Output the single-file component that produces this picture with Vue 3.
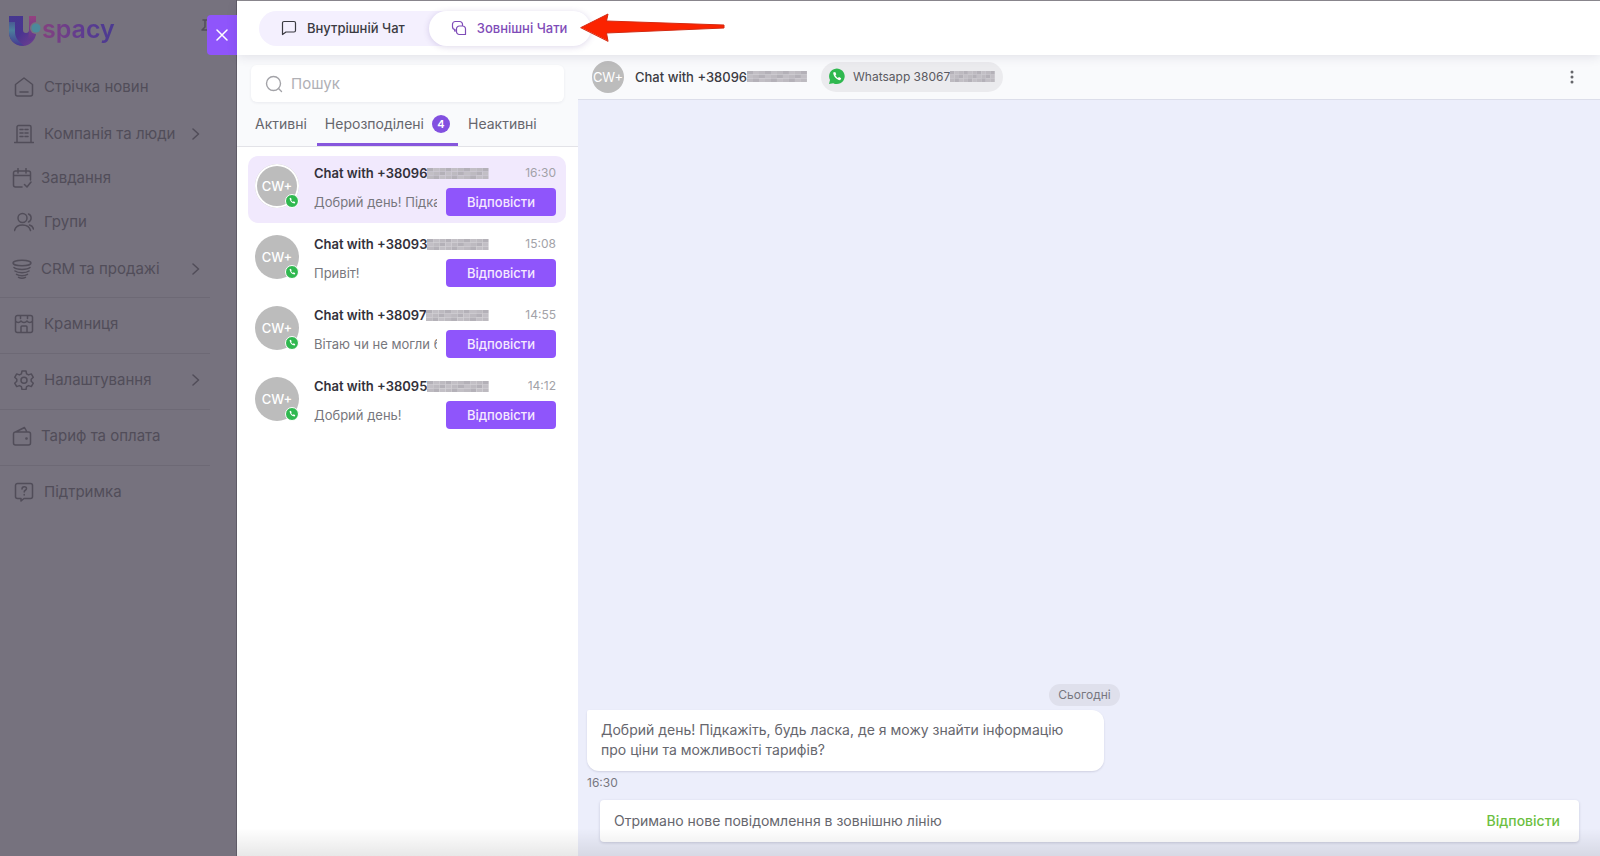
<!--
  App.vue
  Зовнішні чати: бічне меню під затемненням, список розмов і відкрита розмова.
-->

<script setup>
import { computed, ref } from "vue";

const navGroups = [
  [
    { icon: "home", label: "Стрічка новин" },
    { icon: "company", label: "Компанія та люди", expandable: true },
    { icon: "tasks", label: "Завдання", compact: true },
    { icon: "groups", label: "Групи" },
    { icon: "crm", label: "CRM та продажі", expandable: true, compact: true },
  ],
  [{ icon: "shop", label: "Крамниця" }],
  [{ icon: "settings", label: "Налаштування", expandable: true }],
  [{ icon: "wallet", label: "Тариф та оплата", compact: true }],
  [{ icon: "support", label: "Підтримка" }],
];

const tabs = [
  { id: "active", label: "Активні" },
  { id: "unassigned", label: "Нерозподілені", count: 4 },
  { id: "inactive", label: "Неактивні" },
];

const chats = [
  { id: 1, name: "Chat with +38096", text: "Добрий день! Підкажіть", time: "16:30" },
  { id: 2, name: "Chat with +38093", text: "Привіт!", time: "15:08" },
  { id: 3, name: "Chat with +38097", text: "Вітаю чи не могли б", time: "14:55" },
  { id: 4, name: "Chat with +38095", text: "Добрий день!", time: "14:12" },
];

const mode = ref("external");
const activeTab = ref("unassigned");
const activeChatId = ref(1);
const search = ref("");

const visibleChats = computed(() =>
  chats.filter((chat) => chat.name.toLowerCase().includes(search.value.toLowerCase()))
);

// клітинки мозаїки, що закриває кінець номера
const shades = ["#b4b1b8", "#a9a6ad", "#bdbac0", "#c9c7cc", "#b0adb3", "#c2bfc5", "#a5a2a9", "#d0ced3"];
const cells = Array.from({ length: 30 }, (_, i) => ({
  x: i % 10,
  y: Math.floor(i / 10),
  fill: shades[(i * 5 + Math.floor(i / 3)) % shades.length],
}));
</script>

<template>
  <div class="app">
    <aside class="sidebar">
      <div class="sidebar-head">
        <a class="logo" href="#" aria-label="Uspacy">
          <svg width="32" height="32" viewBox="0 0 32 32" aria-hidden="true">
            <defs>
              <linearGradient id="mark" x1="0" y1="0" x2="1" y2="1">
                <stop offset="0" stop-color="#45388f" />
                <stop offset="0.5" stop-color="#4a3490" />
                <stop offset="1" stop-color="#74408f" />
              </linearGradient>
              <linearGradient id="side" x1="0" y1="0" x2="0" y2="1">
                <stop offset="0" stop-color="#4a5a94" />
                <stop offset="0.35" stop-color="#4c7f9c" />
                <stop offset="1" stop-color="#443a92" />
              </linearGradient>
              <linearGradient id="stem" x1="0" y1="0" x2="0" y2="1">
                <stop offset="0" stop-color="#95417f" />
                <stop offset="1" stop-color="#5b3990" />
              </linearGradient>
            </defs>
            <path d="M0 1h14v14a3 3 0 0 0 6 0V1h7v16.500a13.500 13.500 0 0 1-27 0z" fill="url(#mark)" />
            <path d="M0 7h6v10c0 6 4 10 9 13.500C6 31 0 25 0 17z" fill="url(#side)" />
            <path d="M20 1h7v16c0 5-3 8-6 9-3-2-1-6-1-10z" fill="url(#stem)" />
            <circle cx="27" cy="13" r="6" fill="#76727e" />
            <circle cx="27" cy="13" r="4.500" fill="#4b8a9b" />
          </svg>
          <span class="logo-text">spacy</span>
        </a>
        <svg class="pin" width="18" height="20" viewBox="0 0 18 20" aria-hidden="true">
          <path d="M3 2h12M5 2v7l-3 3h14l-3-3V2M9 12v7" />
        </svg>
      </div>

      <nav class="nav">
        <ul v-for="(group, index) in navGroups" :key="index" class="nav-group">
          <li
            v-for="item in group"
            :key="item.label"
            :class="['nav-item', { 'nav-item--expandable': item.expandable }]"
          >
            <a href="#" :class="['nav-link', { 'nav-link--compact': item.compact }]">
              <svg class="nav-icon" width="20" height="20" viewBox="0 0 20 20" aria-hidden="true">
                <path
                  v-if="item.icon === 'home'"
                  d="M1.500 7.500 10 1l8.500 6.500V17a2 2 0 0 1-2 2h-13a2 2 0 0 1-2-2zM6 15h8"
                />
                <path
                  v-else-if="item.icon === 'company'"
                  d="M3 18V3a1.500 1.500 0 0 1 1.500-1.500h11A1.500 1.500 0 0 1 17 3v15M.5 18.500h19M6 5.500h3M11 5.500h3M6 9h3M11 9h3M6 12.500h3M11 12.500h3"
                />
                <path
                  v-else-if="item.icon === 'tasks'"
                  d="M6 .5V5M14 .5V5M1.500 7.500h17V5a2 2 0 0 0-2-2h-13a2 2 0 0 0-2 2v12a2 2 0 0 0 2 2H10M18.500 7.500V12M12.500 16.500l2.500 2.500 4-5"
                />
                <g v-else-if="item.icon === 'groups'">
                  <circle cx="8.500" cy="6" r="4.500" />
                  <path d="M.5 18.500c1-4 4-5.500 8-5.500s7 1.500 8 5.500M14.500 2c3.500 1.500 3.500 6.500 0 8M15.500 13c2 .5 3.500 2 4 4" />
                </g>
                <g v-else-if="item.icon === 'crm'">
                  <ellipse cx="10" cy="4" rx="9" ry="2.800" />
                  <path d="M2 8.500c3 2.500 13 2.500 16 0M3 12c3 2.200 11 2.200 14 0M4.500 15.300c3 1.800 8 1.800 11 0M6.500 18.300c2 1 5 1 7 0" />
                </g>
                <path
                  v-else-if="item.icon === 'shop'"
                  d="M3.500 1.500h13a2 2 0 0 1 2 2v13a2 2 0 0 1-2 2h-13a2 2 0 0 1-2-2v-13a2 2 0 0 1 2-2zM6.500 1.500v3M13.500 1.500v3M1.500 7c1.500 2 4 2 5.500 0 1.500 2 4.500 2 6 0 1.500 2 4 2 5.500 0M7 18.500V13a1 1 0 0 1 1-1h4a1 1 0 0 1 1 1v5.500"
                />
                <g v-else-if="item.icon === 'settings'">
                  <path
                    d="M8 1h4l.6 2.800 2 1.100 2.700-1 2 3.400-2.100 1.900v2.100l2.100 1.900-2 3.400-2.700-1-2 1.100L12 19.500H8l-.6-2.800-2-1.100-2.700 1-2-3.400 2.100-1.900V9.200L.7 7.300l2-3.400 2.700 1 2-1.100z"
                  />
                  <circle cx="10" cy="10.200" r="3" />
                </g>
                <g v-else-if="item.icon === 'wallet'">
                  <path d="M3.500 6h13a2 2 0 0 1 2 2v9a2 2 0 0 1-2 2h-13a2 2 0 0 1-2-2V8a2 2 0 0 1 2-2zL12.500 1.500 15 6" />
                  <circle cx="14.500" cy="12.500" r=".6" />
                </g>
                <path
                  v-else
                  d="M3.500 1.500h13a2 2 0 0 1 2 2v11a2 2 0 0 1-2 2H10l-3 2.500v-2.500H3.500a2 2 0 0 1-2-2v-11a2 2 0 0 1 2-2zM8 7c0-3 4.500-3 4.500-.5 0 2-2.300 1.500-2.300 3.500M10.200 12.500v.5"
                />
              </svg>
              <span>{{ item.label }}</span>
              <svg v-if="item.expandable" class="nav-chevron" width="8" height="12" viewBox="0 0 8 12" aria-hidden="true">
                <path d="M1 1l5.500 5L1 11" />
              </svg>
            </a>
          </li>
        </ul>
      </nav>

      <button class="close-btn" aria-label="Закрити">
        <svg width="12" height="12" viewBox="0 0 12 12" aria-hidden="true">
          <path d="M1 1l10 10M11 1L1 11" />
        </svg>
      </button>
    </aside>

    <main class="drawer">
      <header class="topbar">
        <div class="mode-switch">
          <button :class="['mode-btn', { active: mode === 'internal' }]" @click="mode = 'internal'">
            <svg width="16" height="16" viewBox="0 0 16 16" aria-hidden="true">
              <path d="M3 1.500h10A1.500 1.500 0 0 1 14.500 3v7.500A1.500 1.500 0 0 1 13 12H5l-3.500 2.500V3A1.500 1.500 0 0 1 3 1.500z" />
            </svg>
            Внутрішній Чат
          </button>
          <button :class="['mode-btn', { active: mode === 'external' }]" @click="mode = 'external'">
            <svg width="16" height="16" viewBox="0 0 16 16" aria-hidden="true">
              <path
                d="M5.500 11H3.500L4 9.500A2.800 2.800 0 0 1 1.500 6.700V4.300a2.800 2.800 0 0 1 2.800-2.800h4.400a2.800 2.800 0 0 1 2.800 2.800V6M8.300 6h3.400a2.800 2.800 0 0 1 2.800 2.800v5.700H8.300a2.800 2.800 0 0 1-2.800-2.800V8.800A2.800 2.800 0 0 1 8.300 6z"
              />
            </svg>
            Зовнішні Чати
          </button>
        </div>
        <svg class="pointer" width="146" height="30" viewBox="0 0 146 30" aria-hidden="true">
          <path d="M1 14.500 28 1 26.500 8 144 12v3L26.500 20 28 28z" />
        </svg>
      </header>

      <div class="workspace">
        <section class="chat-list">
          <div class="list-head">
            <label class="search">
              <svg width="18" height="18" viewBox="0 0 18 18" aria-hidden="true">
                <circle cx="8.500" cy="8.500" r="7" />
                <path d="M13.500 13.500l3 3" />
              </svg>
              <input v-model="search" type="text" placeholder="Пошук" aria-label="Пошук" />
            </label>
            <div class="tabs">
              <button
                v-for="tab in tabs"
                :key="tab.id"
                :class="['tab-btn', { active: activeTab === tab.id }]"
                @click="activeTab = tab.id"
              >
                {{ tab.label }}
                <span v-if="tab.count" class="tab-count">{{ tab.count }}</span>
              </button>
            </div>
          </div>

          <ul class="chats">
            <li
              v-for="chat in visibleChats"
              :key="chat.id"
              :class="['chat', { active: chat.id === activeChatId }]"
              @click="activeChatId = chat.id"
            >
              <div class="avatar">
                CW+
                <svg class="avatar-badge" width="14" height="14" viewBox="0 0 14 14" aria-hidden="true">
                  <circle cx="7" cy="7" r="6.500" fill="#2fb84f" stroke="#fff" />
                  <path d="M4.500 4.200c.5 3 2.300 4.900 5.200 5.400l.6-1.400-1.600-.9-.8.700c-.8-.4-1.400-1-1.800-1.900l.6-.7-.8-1.600z" fill="#fff" />
                </svg>
              </div>
              <div class="chat-body">
                <div class="chat-row">
                  <div class="chat-name">
                    {{ chat.name }}
                    <svg class="mosaic" viewBox="0 0 10 3" preserveAspectRatio="none" aria-hidden="true">
                      <rect v-for="(cell, i) in cells" :key="i" :x="cell.x" :y="cell.y" width="1" height="1" :fill="cell.fill" />
                    </svg>
                  </div>
                  <time class="chat-time">{{ chat.time }}</time>
                </div>
                <div class="chat-row">
                  <p class="chat-text">{{ chat.text }}</p>
                  <button class="btn-reply">Відповісти</button>
                </div>
              </div>
            </li>
          </ul>
        </section>

        <section class="conversation">
          <header class="conversation-head">
            <div class="avatar avatar--small">CW+</div>
            <h1 class="conversation-title">
              Chat with +38096
              <svg class="mosaic" viewBox="0 0 10 3" preserveAspectRatio="none" aria-hidden="true">
                <rect v-for="(cell, i) in cells" :key="i" :x="cell.x" :y="cell.y" width="1" height="1" :fill="cell.fill" />
              </svg>
            </h1>
            <div class="channel">
              <svg width="17" height="17" viewBox="0 0 17 17" aria-hidden="true">
                <path d="M1 16l1-4a7.800 7.800 0 1 1 3.200 3.200z" fill="#2fb84f" />
                <path d="M5.200 4.500c.2 4 3 7 7 7.800l1-2-2.200-1.400-1.100 1c-1.200-.5-2-1.400-2.500-2.600l.9-1L7.200 4z" fill="#fff" />
              </svg>
              <span class="channel-name">
                Whatsapp 38067
                <svg class="mosaic" viewBox="0 0 10 3" preserveAspectRatio="none" aria-hidden="true">
                  <rect v-for="(cell, i) in cells" :key="i" :x="cell.x" :y="cell.y" width="1" height="1" :fill="cell.fill" />
                </svg>
              </span>
            </div>
            <button class="menu-btn" aria-label="Меню">
              <svg width="4" height="14" viewBox="0 0 4 14" aria-hidden="true">
                <circle cx="2" cy="2" r="1.500" />
                <circle cx="2" cy="7" r="1.500" />
                <circle cx="2" cy="12" r="1.500" />
              </svg>
            </button>
          </header>

          <div class="messages">
            <span class="day">Сьогодні</span>
            <p class="bubble">Добрий день! Підкажіть, будь ласка, де я можу знайти інформацію про ціни та можливості тарифів?</p>
            <time class="bubble-time">16:30</time>
          </div>

          <footer class="notice">
            <span>Отримано нове повідомлення в зовнішню лінію</span>
            <button class="notice-btn">Відповісти</button>
          </footer>
        </section>
      </div>
      <div class="bottom-shade"></div>
    </main>
  </div>
</template>

<style>
body {
  background: #76727e;
}
</style>

<style scoped>
.app,
.app *,
.app *::before {
  box-sizing: border-box;
}

.app {
  display: flex;
  min-height: 100vh;
  font-family: Inter, "Noto Sans", sans-serif;
  font-size: 13px;
  line-height: 20px;
  color: #3b3b42;
}

button {
  padding: 0;
  border: none;
  background: none;
  color: inherit;
  font: inherit;
  cursor: pointer;
}

ul {
  margin: 0;
  padding: 0;
  list-style: none;
}

svg {
  flex-shrink: 0;
  fill: none;
  stroke-linecap: round;
  stroke-linejoin: round;
}

/* бічне меню */
.sidebar {
  position: relative;
  flex: 0 0 237px;
  border-right: 1px solid #5f5b67;
  background: #76727e;
  color: #514d59;
}

.sidebar-head {
  display: flex;
  align-items: center;
  justify-content: space-between;
  height: 65px;
  padding: 0 18px 4px 9px;
}

.logo {
  display: flex;
  align-items: center;
  gap: 1px;
  text-decoration: none;
}

.logo-text {
  padding-bottom: 4px;
  background: linear-gradient(90deg, #84417f, #5b3b91 60%, #4a3a91);
  background-clip: text;
  color: transparent;
  font-size: 25px;
  font-weight: 600;
  line-height: 32px;
}

.pin {
  margin-bottom: 6px;
  stroke: #514d59;
  stroke-width: 1.5;
}

.nav-group {
  padding: 4px 0 7px;
}

.nav-group:first-child {
  padding: 0 0 6px;
}

.nav-group:not(:last-child) {
  width: 210px;
  border-bottom: 1px solid #6d6975;
}

.nav-item + .nav-item--expandable {
  margin-top: 3px;
}

.nav-link {
  display: flex;
  align-items: center;
  gap: 10px;
  height: 44px;
  padding: 0 10px 0 14px;
  color: inherit;
  font-size: 15px;
  text-decoration: none;
}

.nav-link--compact {
  gap: 9px;
  padding-left: 12px;
}

.nav-icon,
.nav-chevron {
  stroke: currentColor;
  stroke-width: 1.5;
}

.nav-chevron {
  margin-left: auto;
}

.close-btn {
  position: absolute;
  top: 15px;
  right: -1px;
  display: flex;
  align-items: center;
  justify-content: center;
  width: 30px;
  height: 40px;
  border-radius: 4px 0 0 4px;
  background: #8f55fb;
}

.close-btn svg {
  stroke: #fff;
  stroke-width: 1.5;
}

/* панель чатів */
.drawer {
  position: relative;
  display: flex;
  flex: 1;
  flex-direction: column;
  min-width: 0;
  border-top: 1px solid #8c8a8f;
  background: #fff;
}

.topbar {
  position: relative;
  z-index: 1;
  display: flex;
  align-items: center;
  height: 54px;
  padding-left: 22px;
  background: #fff;
  box-shadow: 0 2px 10px rgb(60 50 90 / 0.12);
}

.mode-switch {
  display: flex;
  border-radius: 18px;
  background: #f4f0fe;
}

.mode-btn {
  display: flex;
  align-items: center;
  gap: 10px;
  height: 35px;
  padding: 0 24px 0 22px;
  border-radius: 18px;
  font-weight: 500;
}

.mode-btn.active {
  background: #fff;
  color: #7f4cb8;
  box-shadow: 0 1px 6px rgb(90 60 150 / 0.2);
}

.mode-btn svg {
  stroke: currentColor;
  stroke-width: 1.2;
}

.pointer {
  position: absolute;
  top: 12px;
  left: 343px;
}

.pointer path {
  fill: #fb2300;
  stroke: #d42a12;
}

.workspace {
  display: flex;
  flex: 1;
}

.chat-list {
  flex: 0 0 341px;
  min-width: 0;
}

.list-head {
  padding: 10px 14px 0;
  border-bottom: 1px solid #e3e3e8;
  background: #f9fafc;
}

.search {
  display: flex;
  align-items: center;
  gap: 8px;
  height: 37px;
  padding: 0 14px;
  border-radius: 6px;
  background: #fff;
  box-shadow: 0 1px 3px rgb(50 50 90 / 0.08);
}

.search svg {
  stroke: #a3a3a8;
  stroke-width: 1.4;
}

.search input {
  flex: 1;
  min-width: 0;
  padding: 0;
  border: none;
  outline: none;
  background: transparent;
  font: inherit;
  font-size: 15px;
}

.search input::placeholder {
  color: #b0b0b5;
}

.tabs {
  display: flex;
  gap: 2px;
  margin-left: -4px;
}

.tab-btn {
  display: flex;
  align-items: center;
  gap: 8px;
  height: 44px;
  padding: 2px 8px 0;
  border-bottom: 3px solid transparent;
  color: #66666d;
  font-size: 14px;
}

.tab-btn.active {
  border-bottom-color: #8757dd;
}

.tab-count {
  width: 18px;
  border-radius: 9px;
  background: #8250e0;
  color: #fff;
  font-size: 11px;
  font-weight: 600;
  line-height: 18px;
}

.chats {
  display: flex;
  flex-direction: column;
  gap: 4px;
  padding: 9px 12px 0 11px;
}

.chat {
  display: flex;
  gap: 15px;
  height: 67px;
  padding: 8px 10px 0 7px;
  border-radius: 10px;
  cursor: pointer;
}

.chat.active {
  background: #f1e9fd;
}

.avatar {
  position: relative;
  display: flex;
  flex: 0 0 44px;
  align-items: center;
  justify-content: center;
  height: 44px;
  border-radius: 50%;
  background: #bcbcbc;
  color: #fff;
  font-weight: 500;
}

.chat.active .avatar {
  box-shadow: inset 0 0 0 2px #fff;
}

.avatar-badge {
  position: absolute;
  right: 0;
  bottom: 0;
}

.chat-body {
  flex: 1;
  min-width: 0;
}

.chat-row {
  display: flex;
  align-items: center;
  justify-content: space-between;
  gap: 9px;
  line-height: 18px;
}

.chat-row + .chat-row {
  margin-top: 6px;
}

.chat-name {
  display: flex;
  align-items: center;
  width: 175px;
  font-weight: 600;
  white-space: nowrap;
  color: #33313a;
}

.mosaic {
  flex: 1;
  min-width: 0;
  height: 11px;
}

.chat-time {
  color: #a2a2a8;
  font-size: 12px;
}

.chat-text {
  flex: 1;
  overflow: hidden;
  margin: 0;
  color: #77777d;
  white-space: nowrap;
}

.btn-reply {
  flex: 0 0 110px;
  height: 28px;
  border-radius: 4px;
  background: #8f55fb;
  color: #f6e9ff;
  font-weight: 500;
}

/* відкрита розмова */
.conversation {
  display: flex;
  flex: 1;
  flex-direction: column;
  min-width: 0;
  background: #eceefb;
}

.conversation-head {
  display: flex;
  align-items: center;
  height: 45px;
  padding: 0 20px 1px 14px;
  border-bottom: 1px solid #dcdeea;
  background: #f9fafc;
}

.avatar--small {
  flex-basis: 32px;
  height: 32px;
  font-weight: 400;
}

.conversation-title {
  display: flex;
  align-items: center;
  width: 172px;
  margin: 0 14px 0 11px;
  font-size: 13px;
  font-weight: 500;
  white-space: nowrap;
}

.channel {
  display: flex;
  align-items: center;
  gap: 8px;
  height: 30px;
  padding: 0 8px 0 7px;
  border-radius: 15px;
  background: #ebebee;
  color: #5a5a61;
  font-size: 12px;
}

.channel-name {
  display: flex;
  align-items: center;
  width: 142px;
  white-space: nowrap;
}

.menu-btn {
  display: flex;
  justify-content: center;
  width: 16px;
  margin-left: auto;
}

.menu-btn svg {
  fill: #66666b;
}

.messages {
  display: flex;
  flex: 1;
  flex-direction: column;
  align-items: flex-start;
  justify-content: flex-end;
  padding: 0 18px 7px 9px;
}

.day {
  align-self: center;
  padding: 0 9px;
  border-radius: 11px;
  background: #dfe0ec;
  color: #77777f;
  font-size: 12px;
  line-height: 22px;
}

.bubble {
  width: 52%;
  margin: 4px 0 2px;
  padding: 10px 32px 11px 14px;
  border-radius: 2px 12px 12px 12px;
  background: #fff;
  box-shadow: 0 1px 2px rgb(50 50 90 / 0.15);
  color: #66666d;
  font-size: 14px;
}

.bubble-time {
  color: #77777f;
  font-size: 12px;
}

.notice {
  display: flex;
  align-items: center;
  justify-content: space-between;
  height: 42px;
  margin: 0 21px 14px 22px;
  padding: 0 19px 0 14px;
  border-radius: 4px;
  background: #fff;
  box-shadow: 0 1px 3px rgb(50 50 90 / 0.2);
  color: #66666d;
  font-size: 14px;
}

.notice-btn {
  color: #6cbf3f;
  font-weight: 500;
}

.bottom-shade {
  position: absolute;
  right: 0;
  bottom: 0;
  left: 0;
  height: 28px;
  background: linear-gradient(rgb(0 0 0 / 0), rgb(0 0 0 / 0.09));
  pointer-events: none;
}
</style>
